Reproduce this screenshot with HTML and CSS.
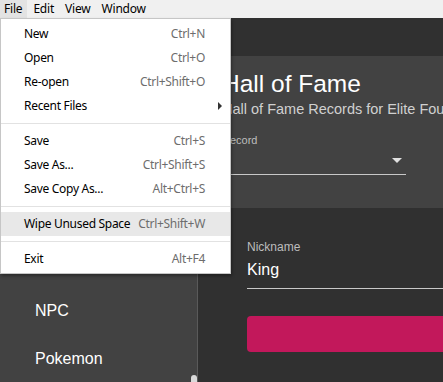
FILE: index.html
```html
<!DOCTYPE html>
<html lang="en">
<head>
    <meta charset="UTF-8">
    <meta name="viewport" content="width=device-width, initial-scale=1.0">
    <title>Hall of Fame</title>
    <link rel="stylesheet" href="styles.css">
</head>
<body>
    <div class="menubar">
        <span class="menubar-item active">File</span>
        <span class="menubar-item">Edit</span>
        <span class="menubar-item">View</span>
        <span class="menubar-item">Window</span>
    </div>

    <div class="app">
        <nav class="sidebar">
            <ul class="nav-list">
                <li>NPC</li>
                <li>Pokemon</li>
            </ul>
            <div class="scroll-thumb"></div>
        </nav>

        <main class="content">
            <section class="card">
                <h1>Hall of Fame</h1>
                <p class="subtitle">Hall of Fame Records for Elite Four</p>
                <div class="card-label">Record</div>
                <div class="select">
                    <span>1</span>
                    <svg class="select-arrow" width="10" height="5" viewBox="0 0 10 5"><path d="M0 0h10L5 5z" fill="#e0e0e0"/></svg>
                </div>
            </section>

            <section class="form">
                <div class="field">
                    <div class="field-label">Nickname</div>
                    <div class="field-value">King</div>
                </div>
                <button class="btn-save" type="button"></button>
            </section>
        </main>
    </div>

    <!-- File menu (open) -->
    <div class="dropdown">
        <div class="menu-item"><span>New</span><span class="shortcut">Ctrl+N</span></div>
        <div class="menu-item"><span>Open</span><span class="shortcut">Ctrl+O</span></div>
        <div class="menu-item"><span>Re-open</span><span class="shortcut">Ctrl+Shift+O</span></div>
        <div class="menu-item"><span>Recent Files</span><span class="shortcut"></span><span class="submenu-arrow"></span></div>
        <div class="separator"></div>
        <div class="menu-item"><span>Save</span><span class="shortcut">Ctrl+S</span></div>
        <div class="menu-item"><span>Save As...</span><span class="shortcut">Ctrl+Shift+S</span></div>
        <div class="menu-item"><span>Save Copy As...</span><span class="shortcut">Alt+Ctrl+S</span></div>
        <div class="separator"></div>
        <div class="menu-item hover"><span>Wipe Unused Space</span><span class="shortcut">Ctrl+Shift+W</span></div>
        <div class="separator"></div>
        <div class="menu-item"><span>Exit</span><span class="shortcut">Alt+F4</span></div>
    </div>
</body>
</html>
```

FILE: styles.css
```css
body {
    margin: 0;
    height: 382px;
    overflow: hidden;
    font-family: "Liberation Sans", Arial, sans-serif;
    background-color: #303030;
}
.menubar {
    display: flex;
    gap: 2px;
    height: 18px;
    background-color: #f0f0f0;
    font-family: "Noto Sans", sans-serif;
    font-size: 12px;
    line-height: 18px;
    letter-spacing: -0.2px;
    color: #000;
}
.menubar-item {
    padding: 0 5px 0 4px;
}
.menubar-item.active {
    background-color: #e3e3e3;
}
.app {
    display: flex;
    height: calc(100% - 18px);
}
.sidebar {
    position: relative;
    width: 198px;
    flex-shrink: 0;
    box-sizing: border-box;
    background-color: #424242;
    border-right: 1px solid #5a5a5a;
    overflow: hidden;
}
.nav-list {
    list-style: none;
    margin: 0;
    padding: 269px 0 0 0;
}
.nav-list li {
    height: 48px;
    line-height: 48px;
    padding-left: 35px;
    font-size: 16px;
    color: #fff;
}
.scroll-thumb {
    position: absolute;
    left: 191px;
    top: 357px;
    width: 6px;
    height: 40px;
    border-radius: 3px;
    background-color: #d9d9d9;
}
.content {
    flex: 1;
    min-width: 0;
    background-color: #303030;
}
.card {
    height: 152px;
    box-sizing: border-box;
    margin: 38px 0 0 8px;
    padding: 14px 16px;
    background-color: #424242;
}
.card h1 {
    margin: 0;
    font-size: 24.5px;
    line-height: 28px;
    font-weight: normal;
    color: #fff;
}
.subtitle {
    margin: 3px 0 0 0;
    font-size: 14.5px;
    line-height: 16px;
    color: #d0d0d0;
    white-space: nowrap;
}
.card-label {
    margin-top: 17px;
    font-size: 11px;
    line-height: 13px;
    color: #bdbdbd;
}
.select {
    display: flex;
    align-items: center;
    justify-content: space-between;
    width: 184px;
    height: 27px;
    border-bottom: 1px solid #c8c8c8;
    font-size: 16px;
    color: #fff;
}
.select-arrow {
    margin-right: 4px;
}
.form {
    padding: 32px 0 0 49px;
}
.field-label {
    font-size: 12px;
    line-height: 14px;
    color: #bdbdbd;
}
.field-value {
    margin-top: 6px;
    padding-bottom: 8px;
    font-size: 16px;
    line-height: 20px;
    color: #fff;
    border-bottom: 1px solid #c8c8c8;
}
.btn-save {
    display: block;
    width: 100%;
    height: 36px;
    margin-top: 27px;
    border: none;
    border-radius: 4px 0 0 4px;
    background-color: #c2185b;
}
.dropdown {
    position: absolute;
    top: 18px;
    left: 0;
    width: 231px;
    box-sizing: border-box;
    padding: 3px 0 2px 0;
    background-color: #fff;
    border: 1px solid #c6c6c6;
    box-shadow: 1px 2px 3px rgba(0, 0, 0, 0.35);
    font-family: "Noto Sans", sans-serif;
    font-size: 12px;
    letter-spacing: -0.3px;
    color: #000;
}
.menu-item {
    display: grid;
    grid-template-columns: 1fr auto 17px;
    align-items: center;
    height: 24px;
    line-height: 24px;
    padding: 0 8px 0 23px;
    white-space: nowrap;
}
.menu-item.hover {
    background-color: #e8e8e8;
}
.shortcut {
    color: #6d6d6d;
    padding-left: 6px;
}
.submenu-arrow {
    justify-self: end;
    width: 0;
    height: 0;
    border-top: 4px solid transparent;
    border-bottom: 4px solid transparent;
    border-left: 4px solid #333;
}
.separator {
    height: 1px;
    margin: 5px 0;
    background-color: #e2e2e2;
}
```
